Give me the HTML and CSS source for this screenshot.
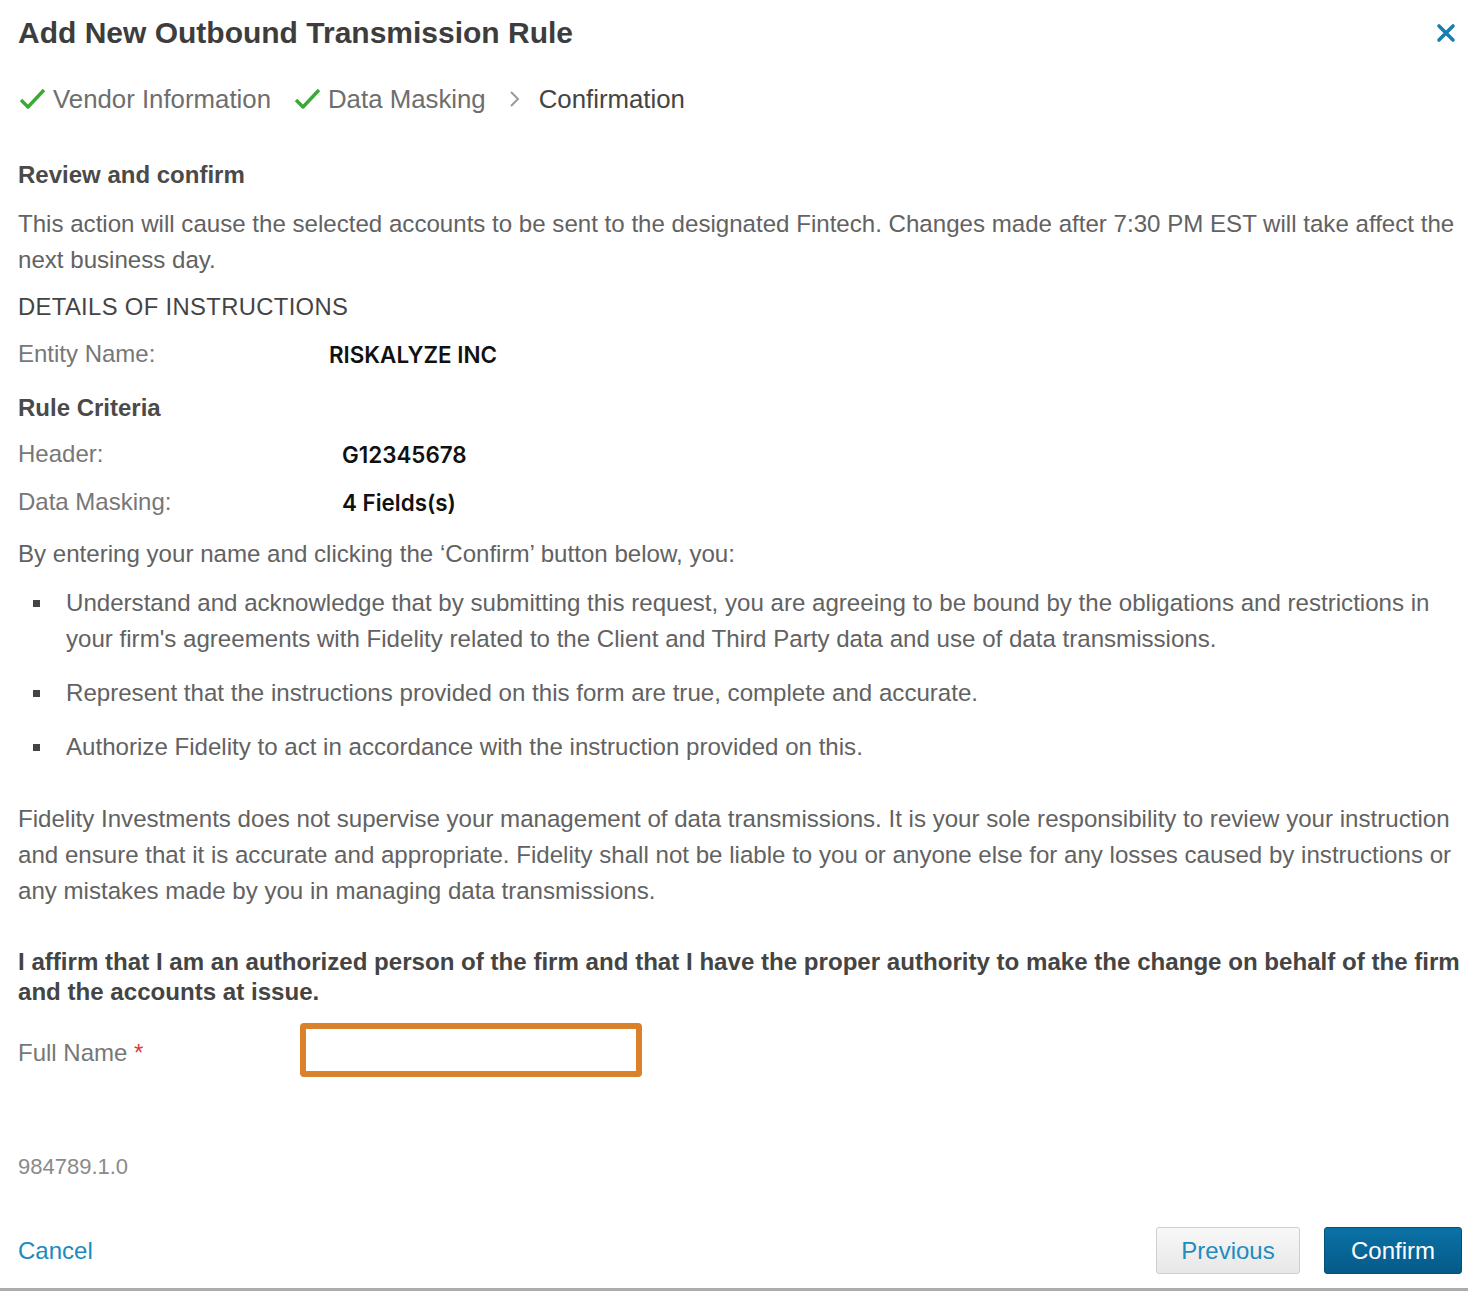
FILE: index.html
```html
<!DOCTYPE html>
<html lang="en">
<head>
<meta charset="utf-8">
<title>Add New Outbound Transmission Rule</title>
<link rel="stylesheet" href="styles.css">
</head>
<body>
<div class="dialog">
  <header class="dialog-head">
    <h1 class="dialog-title">Add New Outbound Transmission Rule</h1>
    <button class="close-btn" aria-label="Close">
      <svg width="20" height="20" viewBox="0 0 20 20"><path d="M3 3 L17 17 M17 3 L3 17" stroke="#1a7fae" stroke-width="3.6" stroke-linecap="round"/></svg>
    </button>
  </header>

  <nav class="steps">
    <span class="step done">
      <svg class="check" width="28" height="24" viewBox="0 0 28 24"><path d="M2 13 L9 20 L25 3" fill="none" stroke="#3aaa35" stroke-width="3.4" stroke-linejoin="round"/></svg>
      Vendor Information
    </span>
    <span class="step done">
      <svg class="check" width="28" height="24" viewBox="0 0 28 24"><path d="M2 13 L9 20 L25 3" fill="none" stroke="#3aaa35" stroke-width="3.4" stroke-linejoin="round"/></svg>
      Data Masking
    </span>
    <svg class="chev" width="14" height="20" viewBox="0 0 14 20"><path d="M3 3 L10 10 L3 17" fill="none" stroke="#9a9a9a" stroke-width="2"/></svg>
    <span class="step current">Confirmation</span>
  </nav>

  <main class="content">
    <h2 class="section-title">Review and confirm</h2>
    <p class="text intro">This action will cause the selected accounts to be sent to the designated Fintech. Changes made after 7:30 PM EST will take affect the next business day.</p>

    <h3 class="caps-title">DETAILS OF INSTRUCTIONS</h3>
    <div class="field entity">
      <span class="field-label">Entity Name:</span>
      <span class="field-value">RISKALYZE INC</span>
    </div>

    <h2 class="section-title rule">Rule Criteria</h2>
    <div class="field crit first">
      <span class="field-label">Header:</span>
      <span class="field-value">G12345678</span>
    </div>
    <div class="field crit">
      <span class="field-label">Data Masking:</span>
      <span class="field-value">4 Fields(s)</span>
    </div>

    <p class="text lead">By entering your name and clicking the ‘Confirm’ button below, you:</p>
    <ul class="terms">
      <li>Understand and acknowledge that by submitting this request, you are agreeing to be bound by the obligations and restrictions in your firm's agreements with Fidelity related to the Client and Third Party data and use of data transmissions.</li>
      <li>Represent that the instructions provided on this form are true, complete and accurate.</li>
      <li>Authorize Fidelity to act in accordance with the instruction provided on this.</li>
    </ul>

    <p class="text disclaimer">Fidelity Investments does not supervise your management of data transmissions. It is your sole responsibility to review your instruction and ensure that it is accurate and appropriate. Fidelity shall not be liable to you or anyone else for any losses caused by instructions or any mistakes made by you in managing data transmissions.</p>

    <p class="affirm">I affirm that I am an authorized person of the firm and that I have the proper authority to make the change on behalf of the firm and the accounts at issue.</p>

    <div class="name-row">
      <label class="name-label" for="fullname">Full Name <span class="req">*</span></label>
      <input id="fullname" class="name-input" type="text">
    </div>

    <div class="version">984789.1.0</div>
  </main>

  <footer class="dialog-foot">
    <a class="cancel" href="#">Cancel</a>
    <div class="actions">
      <button class="btn btn-secondary">Previous</button>
      <button class="btn btn-primary">Confirm</button>
    </div>
  </footer>
</div>
</body>
</html>
```

FILE: styles.css
```css
* { box-sizing: border-box; }

html, body {
  margin: 0;
  padding: 0;
  background: #ffffff;
}

body {
  font-family: "Liberation Sans", Arial, sans-serif;
  color: #666666;
}

.dialog {
  width: 1468px;
  min-height: 1304px;
  padding: 0 6px 0 18px;
  display: flex;
  flex-direction: column;
}

.dialog-head {
  display: flex;
  align-items: center;
  justify-content: space-between;
  height: 34px;
  margin-top: 16px;
}

.dialog-title {
  margin: 0;
  font-size: 30px;
  font-weight: 700;
  color: #3d3d3d;
  line-height: 34px;
}

.close-btn {
  border: 0;
  background: none;
  padding: 0;
  margin-right: 6px;
  display: flex;
  cursor: pointer;
}

.steps {
  display: flex;
  align-items: center;
  height: 34px;
  margin-top: 32px;
  font-size: 25.8px;
}

.step {
  display: flex;
  align-items: center;
  gap: 6px;
  color: #6e6e6e;
  margin-right: 22px;
}

.step .check { margin-left: 1px; }

.step.current {
  color: #444444;
  margin-left: 17px;
}

.content {
  display: flex;
  flex-direction: column;
}

.section-title {
  margin: 41px 0 0;
  font-size: 24px;
  font-weight: 700;
  color: #4a4a4a;
  line-height: 36px;
}

.section-title.rule { margin-top: 18px; }

.text {
  margin: 0;
  font-size: 24.1px;
  line-height: 36px;
  color: #626262;
}

.intro { margin-top: 13px; }

.caps-title {
  margin: 11px 0 0;
  font-size: 23.8px;
  font-weight: 400;
  letter-spacing: 0.35px;
  color: #444444;
  line-height: 36px;
}

.field {
  display: flex;
  align-items: center;
  height: 36px;
  font-size: 24px;
}

.field.entity { margin-top: 11px; }
.field.crit { margin-top: 12px; }
.field.crit.first { margin-top: 10px; }

.field-label {
  color: #777777;
  flex: 0 0 311px;
}

.field.crit .field-label { flex-basis: 324px; }

.field-value {
  font-family: Inter, "Open Sans", sans-serif;
  font-weight: 600;
  color: #111111;
  font-size: 22.4px;
}

.lead { margin-top: 16px; }

.terms {
  list-style: none;
  margin: 13px 0 0;
  padding: 0 0 0 48px;
  font-size: 24.1px;
  line-height: 36px;
  color: #626262;
}

.terms li {
  position: relative;
  margin-bottom: 18px;
}

.terms li:last-child { margin-bottom: 0; }

.terms li::before {
  content: "";
  position: absolute;
  left: -33px;
  top: 15px;
  width: 7px;
  height: 7px;
  background: #444444;
}

.disclaimer { margin-top: 36px; }

.affirm {
  margin: 38px 0 0;
  font-size: 24.1px;
  font-weight: 700;
  line-height: 30px;
  color: #444444;
}

.name-row {
  display: flex;
  align-items: center;
  margin-top: 16px;
}

.name-label {
  flex: 0 0 282px;
  font-size: 24px;
  color: #777777;
  padding-top: 6px;
}

.req { color: #e0393e; }

.name-input {
  width: 342px;
  height: 54px;
  border: 6px solid #d9822b;
  border-radius: 4px;
  background: #ffffff;
  outline: none;
  font: inherit;
}

.version {
  margin-top: 78px;
  font-size: 22px;
  line-height: 24px;
  color: #8a8a8a;
}

.dialog-foot {
  display: flex;
  align-items: center;
  justify-content: space-between;
  margin-top: 48px;
  height: 47px;
  margin-left: -18px;
  margin-right: -6px;
  padding: 0 6px 0 18px;
  position: relative;
}

.dialog-foot::after {
  content: "";
  position: absolute;
  left: 0;
  right: 0;
  bottom: -17px;
  height: 3px;
  background: #acacac;
}

.cancel {
  font-size: 24px;
  color: #1a8bbd;
  text-decoration: none;
}

.actions {
  display: flex;
  gap: 24px;
}

.btn {
  height: 47px;
  font-family: "Liberation Sans", Arial, sans-serif;
  font-size: 24px;
  border-radius: 3px;
  cursor: pointer;
}

.btn-secondary {
  width: 144px;
  color: #1f8bbf;
  background: linear-gradient(#f8f8f8, #e7e7e7);
  border: 1px solid #cfcfcf;
}

.btn-primary {
  width: 138px;
  color: #ffffff;
  background: linear-gradient(#0b72a6, #055a88);
  border: 1px solid #05507a;
}
```
